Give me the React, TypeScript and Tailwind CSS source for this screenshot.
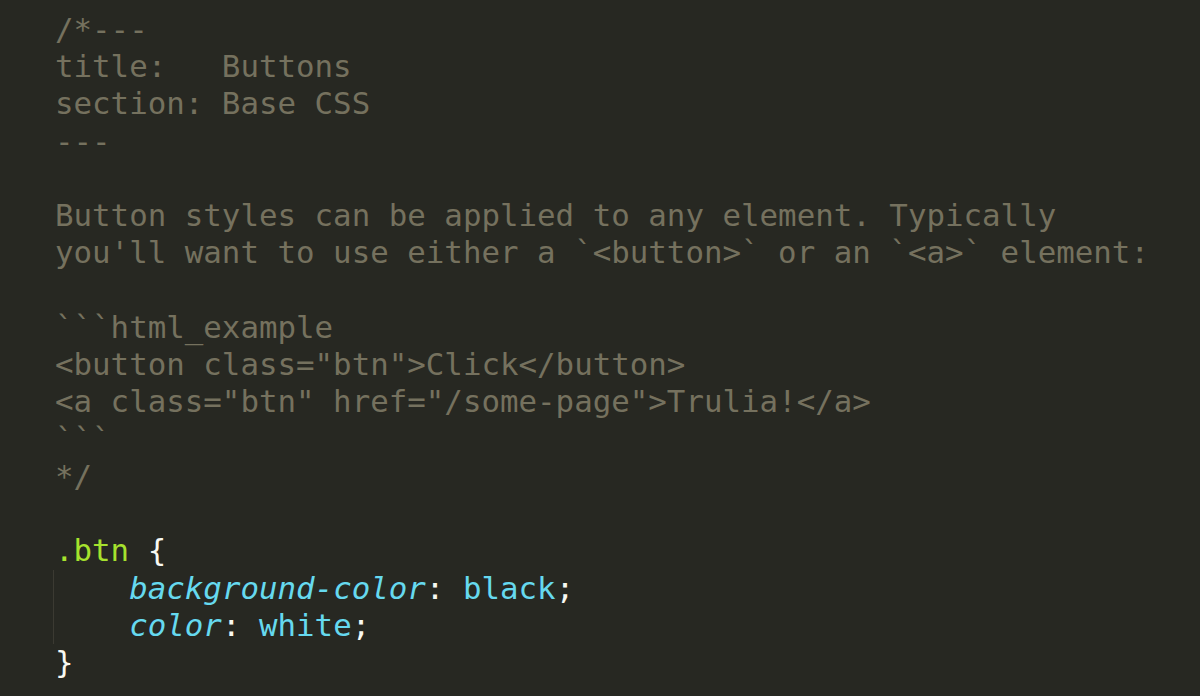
import React from "react";

const C = "text-[#75715e]";
const G = "text-[#a6e22e]";
const B = "text-[#66d9ef]";
const W = "text-[#f8f8f2]";

function Line({ children }: { children?: React.ReactNode }) {
  return <div className="h-[37.24px] leading-[37.24px] whitespace-pre">{children ?? " "}</div>;
}

export default function App() {
  return (
    <div
      className="w-full h-[696px] overflow-hidden bg-[#272822] pl-[55px] pt-[11px] text-[30.8px]"
      style={{ fontFamily: '"DejaVu Sans Mono", "Liberation Mono", monospace' }}
    >
      <div className={C}>
        <Line>/*---</Line>
        <Line>title:   Buttons</Line>
        <Line>section: Base CSS</Line>
        <Line>---</Line>
        <Line />
        <Line>Button styles can be applied to any element. Typically</Line>
        <Line>you'll want to use either a `&lt;button&gt;` or an `&lt;a&gt;` element:</Line>
        <Line />
        <Line>```html_example</Line>
        <Line>&lt;button class="btn"&gt;Click&lt;/button&gt;</Line>
        <Line>&lt;a class="btn" href="/some-page"&gt;Trulia!&lt;/a&gt;</Line>
        <Line>```</Line>
        <Line>*/</Line>
        <Line />
      </div>
      <Line>
        <span className={G}>.btn</span>
        <span className={W}> {"{"}</span>
      </Line>
      <div className="-ml-[2px] pl-[1px] border-l border-[#3b3a32]">
        <Line>
          <span>    </span>
          <span className={`${B} italic`}>background-color</span>
          <span className={W}>: </span>
          <span className={B}>black</span>
          <span className={W}>;</span>
        </Line>
        <Line>
          <span>    </span>
          <span className={`${B} italic`}>color</span>
          <span className={W}>: </span>
          <span className={B}>white</span>
          <span className={W}>;</span>
        </Line>
      </div>
      <Line>
        <span className={W}>{"}"}</span>
      </Line>
    </div>
  );
}
